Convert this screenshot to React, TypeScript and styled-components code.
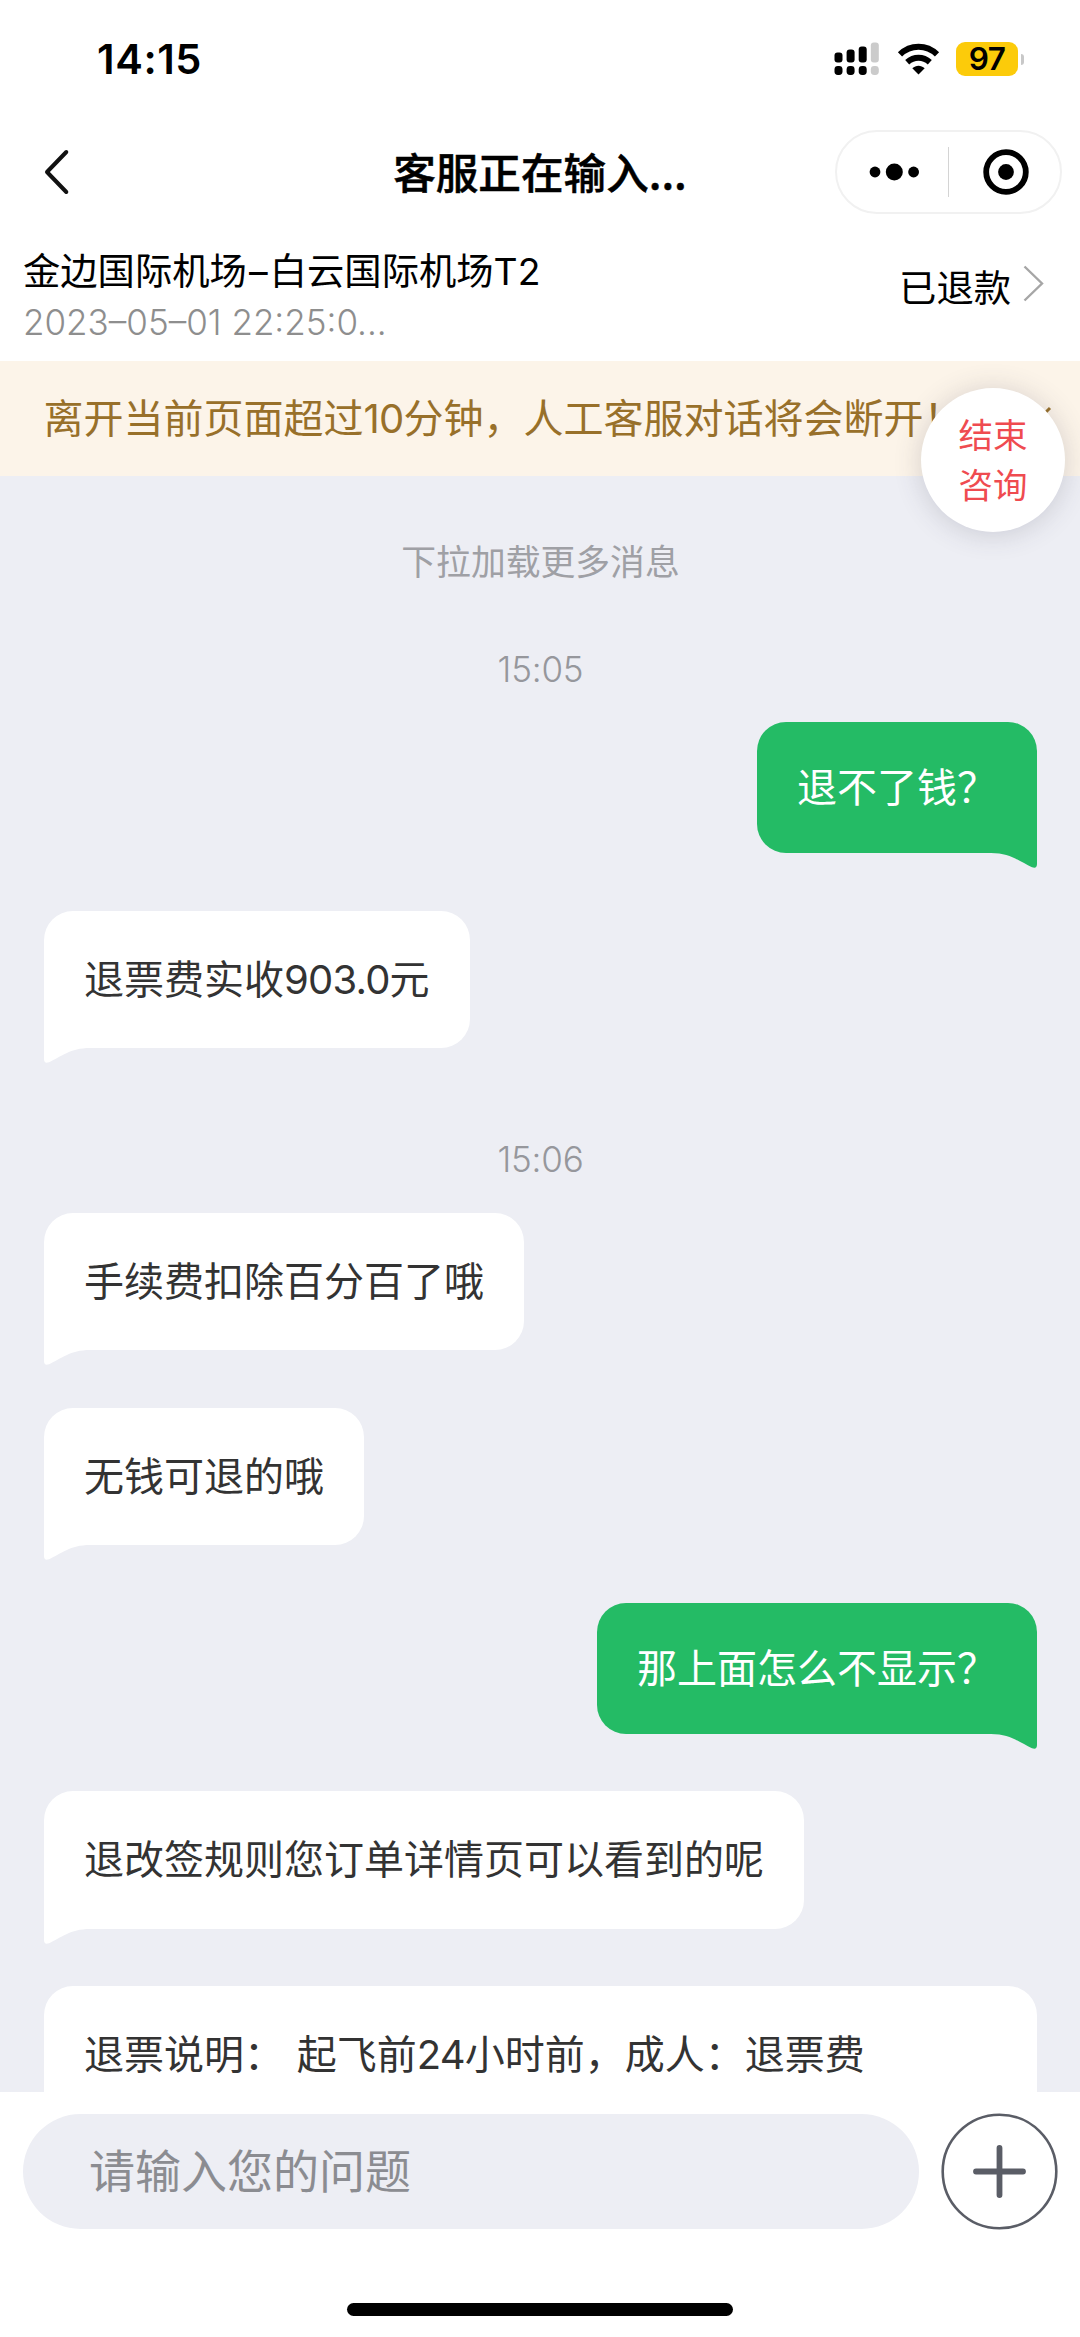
import React from 'react';
import styled, { createGlobalStyle, css } from 'styled-components';

const GlobalStyle = createGlobalStyle`
  * { box-sizing: border-box; }
  body {
    margin: 0;
    background: #fff;
    font-family: Inter, "Noto Sans CJK SC", sans-serif;
    color: #000;
  }
`;

const Screen = styled.div`
  width: 1080px;
  height: 2337px;
  display: flex;
  flex-direction: column;
  background: #fff;
  overflow: hidden;
  position: relative;
`;

const StatusBar = styled.header`
  height: 118px;
  flex: none;
  display: flex;
  justify-content: space-between;
  align-items: center;
  padding: 0 56px 0 97px;
`;

const Clock = styled.span`
  font-size: 41.5px;
  font-weight: 600;
  line-height: 50px;
  letter-spacing: 0.6px;
`;

const StatusIcons = styled.div`
  display: flex;
  align-items: center;
`;

const SignalIcon = styled.svg`
  width: 45px;
  height: 34px;
  margin-right: 18px;
`;

const WifiIcon = styled.svg`
  width: 43px;
  height: 34px;
  margin-right: 16px;
`;

const Battery = styled.span`
  width: 62px;
  height: 34px;
  border-radius: 9px;
  background: #fccb0a;
  display: flex;
  align-items: center;
  justify-content: center;
  font-size: 31.5px;
  font-weight: 600;
  letter-spacing: -0.6px;
  line-height: 34px;
`;

const BatteryTip = styled.span`
  width: 3px;
  height: 11px;
  margin-left: 3px;
  border-radius: 0 3px 3px 0;
  background: #c8c8c8;
`;

const NavBar = styled.nav`
  height: 108px;
  flex: none;
  display: grid;
  grid-template-columns: 300px 1fr 300px;
  align-items: center;
`;

const BackIcon = styled.svg`
  width: 26px;
  height: 46px;
  margin-left: 44px;
`;

const Title = styled.h1`
  margin: 0;
  padding-bottom: 3px;
  text-align: center;
  font-family: "Noto Sans CJK SC", sans-serif;
  font-size: 42.6px;
  font-weight: 500;
  -webkit-text-stroke: 0.5px #000;
  line-height: 60px;
  white-space: nowrap;
`;

const Capsule = styled.div`
  justify-self: end;
  width: 227px;
  height: 84px;
  margin-right: 18px;
  border: 2px solid #f1f1f1;
  border-radius: 42px;
  display: flex;
  align-items: center;
`;

const CapsuleButton = styled.span`
  flex: 1;
  display: flex;
  justify-content: center;
  padding-left: 3px;
`;

const CapsuleDivider = styled.span`
  width: 1px;
  height: 50px;
  background: #d4d4d4;
`;

const OrderRow = styled.section`
  height: 135px;
  flex: none;
  display: flex;
  justify-content: space-between;
  padding: 21px 36px 0 23px;
`;

const OrderInfo = styled.div`
  display: flex;
  flex-direction: column;
`;

const Route = styled.span`
  font-size: 37.3px;
  line-height: 50px;
`;

const RouteDash = styled.span`
  display: inline-block;
  width: 23px;
  text-align: center;
`;

const Depart = styled.span`
  font-size: 35px;
  line-height: 50px;
  color: #8e8e8e;
  font-weight: 350;
`;

const OrderStatus = styled.div`
  display: flex;
  align-items: flex-start;
  font-size: 37.3px;
  line-height: 50px;
  padding-top: 17px;
`;

const ChevronIcon = styled.svg`
  width: 21px;
  height: 37px;
  margin: 1px 0 0 12px;
`;

const Notice = styled.section`
  height: 115px;
  flex: none;
  display: flex;
  align-items: center;
  justify-content: space-between;
  padding: 0 28px 0 43.5px;
  background: #fcf4e9;
  color: #98702a;
  font-size: 40px;
  line-height: 56px;
  white-space: nowrap;
`;

const CloseIcon = styled.svg`
  width: 26px;
  height: 26px;
  flex: none;
`;

const EndButton = styled.button`
  position: absolute;
  left: 921px;
  top: 388px;
  width: 144px;
  height: 144px;
  padding: 0 36px 3px;
  border: 0;
  border-radius: 50%;
  background: #fff;
  box-shadow: 0 2px 28px rgba(60, 60, 80, 0.2);
  color: #ef4b50;
  font-family: "Noto Sans CJK SC", sans-serif;
  font-size: 34.5px;
  line-height: 49.5px;
  text-align: center;
`;

const Chat = styled.main`
  height: 1616px;
  flex: none;
  overflow: hidden;
  background: #edeef4;
  padding: 61px 43px 0 44px;
  display: flex;
  flex-direction: column;
`;

const Hint = styled.p`
  margin: 0;
  text-align: center;
  font-size: 34.8px;
  line-height: 50px;
  color: #9fa0a5;
`;

const Time = styled.time<{ $gap: number }>`
  margin-top: ${(p) => p.$gap}px;
  text-align: center;
  font-size: 35px;
  font-weight: 350;
  line-height: 50px;
  letter-spacing: -0.2px;
  color: #96979c;
  margin-bottom: -29px;
`;

const Bubble = styled.div<{ $mine?: boolean; $full?: boolean }>`
  position: relative;
  flex: none;
  margin-top: 57.4px;
  padding: 0 40px;
  border-radius: 29px;
  font-size: 40px;
  white-space: pre;
  word-spacing: 1.5px;
  ${(p) =>
    p.$mine
      ? css`
          align-self: flex-end;
          height: 131px;
          line-height: 131px;
          background: #24bb65;
          color: #fff;
          border-bottom-right-radius: 0;
        `
      : css`
          align-self: ${p.$full ? 'stretch' : 'flex-start'};
          height: 137.6px;
          line-height: 137.6px;
          background: #fff;
          color: #333;
          border-bottom-left-radius: 0;
        `}
`;

const Digits = styled.span`
  letter-spacing: -0.8px;
`;

const Tail = styled.svg<{ $mine?: boolean }>`
  position: absolute;
  top: calc(100% - 1px);
  ${(p) => (p.$mine ? 'right: 0;' : 'left: 0; transform: scaleX(-1);')}
  width: 46px;
  height: 16px;
  fill: ${(p) => (p.$mine ? '#24bb65' : '#fff')};
`;

const InputBar = styled.footer`
  height: 159px;
  flex: none;
  display: flex;
  align-items: flex-start;
  padding: 22px 22px 0 23px;
`;

const InputField = styled.div`
  width: 896px;
  height: 115px;
  border-radius: 58px;
  background: #edeef4;
  padding-left: 66px;
  font-size: 46px;
  line-height: 115px;
  color: #8b8c91;
`;

const PlusIcon = styled.svg`
  width: 117px;
  height: 117px;
  margin: -1px 0 0 22px;
`;

const HomeIndicator = styled.div`
  width: 386px;
  height: 13px;
  margin: 52px auto 0;
  border-radius: 7px;
  background: #000;
`;

type Entry =
  | { kind: 'time'; text: string; gap: number }
  | { kind: 'mine' | 'theirs' | 'full'; text: string };

const entries: Entry[] = [
  { kind: 'time', text: '15:05', gap: 57 },
  { kind: 'mine', text: '退不了钱？' },
  { kind: 'theirs', text: '退票费实收903.0元' },
  { kind: 'time', text: '15:06', gap: 86 },
  { kind: 'theirs', text: '手续费扣除百分百了哦' },
  { kind: 'theirs', text: '无钱可退的哦' },
  { kind: 'mine', text: '那上面怎么不显示？' },
  { kind: 'theirs', text: '退改签规则您订单详情页可以看到的呢' },
  { kind: 'full', text: '退票说明： 起飞前24小时前，成人：退票费' },
];

// Numbers inside Chinese sentences are set slightly tighter than the rest.
function withDigits(text: string) {
  return text
    .split(/([\d.]+)/)
    .map((part, i) => (i % 2 ? <Digits key={i}>{part}</Digits> : part));
}

function Message({ mine, full, text }: { mine?: boolean; full?: boolean; text: string }) {
  return (
    <Bubble $mine={mine} $full={full}>
      {withDigits(text)}
      <Tail $mine={mine} viewBox="0 0 46 16">
        <path d="M0 0 V1 C20 1 29 10 41 15.2 Q46 17 46 12 V0 Z" />
      </Tail>
    </Bubble>
  );
}

const signalTops = [10, 7, 4, 0];

export default function App() {
  return (
    <Screen lang="zh-CN">
      <GlobalStyle />
      <StatusBar>
        <Clock>14:15</Clock>
        <StatusIcons>
          <SignalIcon viewBox="0 0 45 34">
            {signalTops.map((top, i) => (
              <g key={top} fill={i === 3 ? '#cbcbcb' : '#000'}>
                <rect x={0.5 + i * 12.1} y={top + 0.5} width="8" height={20 - top} rx="3" />
                <rect x={0.5 + i * 12.1} y="24" width="8" height="9" rx="3.4" />
              </g>
            ))}
          </SignalIcon>
          <WifiIcon viewBox="0 0 43 34">
            <g fill="none" stroke="#000" strokeWidth="6">
              <path d="M3 12.4 C13.5 2.2 29.5 2.2 40 12.4" />
              <path d="M10.2 20.2 C16.8 14.2 26.2 14.2 32.8 20.2" />
            </g>
            <path d="M15.3 26.2 C19 22.8 24 22.8 27.7 26.2 L21.5 32.6 Z" />
          </WifiIcon>
          <Battery>97</Battery>
          <BatteryTip />
        </StatusIcons>
      </StatusBar>

      <NavBar>
        <BackIcon viewBox="0 0 26 46" fill="none" stroke="#111" strokeWidth="4" strokeLinecap="round" strokeLinejoin="round">
          <path d="M22.3 3 L3 23 L22.3 43" />
        </BackIcon>
        <Title>客服正在输入...</Title>
        <Capsule>
          <CapsuleButton>
            <svg width="50" height="18" viewBox="0 0 50 18">
              <circle cx="6" cy="9" r="5.4" />
              <circle cx="25.3" cy="9" r="8.5" />
              <circle cx="44.6" cy="9" r="5.4" />
            </svg>
          </CapsuleButton>
          <CapsuleDivider />
          <CapsuleButton>
            <svg width="46" height="46" viewBox="0 0 46 46">
              <circle cx="23" cy="23" r="19.8" fill="none" stroke="#000" strokeWidth="5.8" />
              <circle cx="23" cy="23" r="7.9" />
            </svg>
          </CapsuleButton>
        </Capsule>
      </NavBar>

      <OrderRow>
        <OrderInfo>
          <Route>
            金边国际机场<RouteDash>–</RouteDash>白云国际机场T2
          </Route>
          <Depart>2023–05–01 22:25:0...</Depart>
        </OrderInfo>
        <OrderStatus>
          已退款
          <ChevronIcon viewBox="0 0 21 37" fill="none" stroke="#a6a6a6" strokeWidth="2.4">
            <path d="M1.5 1.5 L19 18.5 L1.5 35.5" />
          </ChevronIcon>
        </OrderStatus>
      </OrderRow>

      <Notice>
        <span>{withDigits('离开当前页面超过10分钟，人工客服对话将会断开！')}</span>
        <CloseIcon viewBox="0 0 26 26" fill="none" stroke="#98702a" strokeWidth="3">
          <path d="M2 2 L24 24 M24 2 L2 24" />
        </CloseIcon>
      </Notice>

      <Chat>
        <Hint>下拉加载更多消息</Hint>
        {entries.map((e) =>
          e.kind === 'time' ? (
            <Time key={e.text} $gap={e.gap}>
              {e.text}
            </Time>
          ) : (
            <Message key={e.text} mine={e.kind === 'mine'} full={e.kind === 'full'} text={e.text} />
          ),
        )}
      </Chat>

      <InputBar>
        <InputField>请输入您的问题</InputField>
        <PlusIcon viewBox="0 0 117 117" fill="none" stroke="#5a5d66">
          <circle cx="58.5" cy="58.5" r="56.8" strokeWidth="2.6" />
          <path d="M35 58.5 H82 M58.5 35 V82" strokeWidth="5.8" strokeLinecap="round" />
        </PlusIcon>
      </InputBar>
      <HomeIndicator />

      <EndButton>结束咨询</EndButton>
    </Screen>
  );
}
